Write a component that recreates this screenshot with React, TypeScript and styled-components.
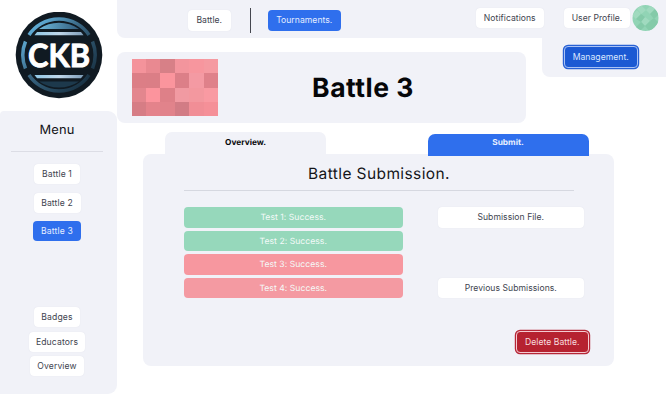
import React from "react";
import styled, { createGlobalStyle, css } from "styled-components";

const GlobalStyle = createGlobalStyle`
  *, *::before, *::after { box-sizing: border-box; }
  body { margin: 0; background: #fff; overflow: hidden; }
  button { font: inherit; letter-spacing: inherit; border: 0; padding: 0; }
`;

const panel = "#f1f2f8";

const Page = styled.div`
  width: 666px;
  height: 403px;
  display: grid;
  grid-template-columns: 117px 1fr;
  background: #fff;
  font-family: Inter, "Liberation Sans", sans-serif;
  font-size: 8.6px;
  letter-spacing: 0.04px;
  text-rendering: geometricPrecision;
  color: #41444f;
`;

const Side = styled.div`
  display: flex;
  flex-direction: column;
`;

const LogoBox = styled.div`
  height: 110.5px;
  padding: 12px 0 0 15px;
  svg { display: block; }
`;

const Menu = styled.nav`
  height: 283px;
  background: ${panel};
  border-radius: 4px 9px 9px 0;
  display: flex;
  flex-direction: column;
  align-items: center;
  padding-right: 3px;
`;

const MenuTitle = styled.h2`
  margin: 10px 0 0;
  height: 31px;
  width: 92px;
  border-bottom: 1px solid #dcdde5;
  font-size: 12.9px;
  font-weight: 400;
  line-height: 20px;
  letter-spacing: 0.2px;
  text-align: center;
  color: #111216;
`;

const MenuGroup = styled.div<{ $top: number; $gap: number }>`
  margin-top: ${(p) => p.$top}px;
  display: flex;
  flex-direction: column;
  align-items: center;
  gap: ${(p) => p.$gap}px;
  letter-spacing: 0.14px;
`;

type Tone = "plain" | "blue" | "focus" | "danger";

const tones = {
  plain: css`
    background: #fff;
    color: #41444f;
    box-shadow: 0 0 1px #d9dbe6;
  `,
  blue: css`
    background: #2f6fed;
    color: #e4edff;
  `,
  focus: css`
    background: #1b59d3;
    color: #dce8ff;
    border: 1px solid #a9c2f5;
    box-shadow: 0 0 0 1.2px #2861d4;
  `,
  danger: css`
    background: #b62230;
    color: #f8dcdf;
    border: 1px solid #f4cbd1;
    box-shadow: 0 0 0 1.2px #b62637;
  `,
};

const Button = styled.button<{ $w: number; $h?: number; $tone?: Tone }>`
  width: ${(p) => p.$w}px;
  height: ${(p) => p.$h ?? 20}px;
  flex: none;
  display: flex;
  align-items: center;
  justify-content: center;
  border-radius: 4px;
  white-space: nowrap;
  ${(p) => tones[p.$tone ?? "plain"]}
`;

const Main = styled.main`
  min-width: 0;
`;

const Top = styled.header`
  height: 52px;
  display: grid;
  grid-template-columns: 425px 124px;
`;

const NavBar = styled.div`
  height: 38px;
  background: ${panel};
  border-radius: 0 0 0 8px;
  display: flex;
  align-items: flex-start;
  padding: 9.5px 0 0 70.5px;
`;

const Divider = styled.div`
  flex: none;
  width: 1px;
  height: 25px;
  margin: -2px 17px 0 19px;
  background: #45474f;
`;

const Notify = styled.div`
  flex: none;
  position: relative;
  z-index: 1;
  margin: -1.5px 0 0 135.5px;
`;

const Account = styled.div`
  height: 76.5px;
  background: ${panel};
  border-radius: 0 0 0 8px;
  padding: 5px 0 0 22px;
`;

const UserRow = styled.div`
  display: flex;
  align-items: center;
  gap: 1.5px;
  height: 26px;
  margin-bottom: 15px;
`;

const Banner = styled.section`
  width: 408.5px;
  height: 71px;
  background: ${panel};
  border-radius: 8px;
  padding: 7px 0 0 14.5px;
  display: flex;
`;

const Mosaic = styled.div`
  width: 86.5px;
  height: 57px;
  display: grid;
  grid-template-columns: repeat(6, 1fr);
  grid-template-rows: repeat(4, 1fr);
`;

const Tile = styled.span<{ $c: string }>`
  background: ${(p) => p.$c};
`;

const Title = styled.h1`
  margin: 0 0 0 81px;
  width: 128px;
  line-height: 58px;
  font-size: 26.5px;
  letter-spacing: 0.5px;
  font-weight: 700;
  text-align: center;
  color: #060709;
`;

const Tabs = styled.div`
  height: 31px;
  padding: 9px 0 0 48px;
  display: flex;
`;

const Tab = styled.div<{ $active?: boolean }>`
  width: 161px;
  height: 23px;
  border-radius: 7px 7px 0 0;
  font-size: 8.3px;
  font-weight: 700;
  letter-spacing: 0;
  line-height: 23px;
  text-align: center;
  background: ${panel};
  color: #08090b;
  ${(p) =>
    p.$active &&
    css`
      position: relative;
      margin: 2px 0 0 101.5px;
      height: 22px;
      line-height: 19px;
      background: #2f6fed;
      color: #e9f0ff;
    `}
`;

const Submission = styled.section`
  margin-left: 26px;
  width: 471px;
  height: 211.5px;
  background: ${panel};
  border-radius: 8px;
  padding: 8px 30px 0 41px;
`;

const SectionTitle = styled.h2`
  margin: 0;
  width: 390px;
  height: 29px;
  border-bottom: 1px solid #d6d8e0;
  font-size: 15.5px;
  font-weight: 400;
  line-height: 24px;
  letter-spacing: 0.4px;
  text-align: center;
  color: #15161a;
`;

const Columns = styled.div`
  margin-top: 16px;
  height: 91px;
  display: flex;
  justify-content: space-between;
`;

const Tests = styled.div`
  display: flex;
  flex-direction: column;
  justify-content: space-between;
`;

const Result = styled.div<{ $c: string }>`
  width: 218.5px;
  height: 20.5px;
  border-radius: 4px;
  line-height: 22px;
  text-align: center;
  background: ${(p) => p.$c};
  color: #f4faf9;
`;

const Actions = styled.div`
  display: flex;
  flex-direction: column;
  justify-content: space-between;
`;

const Footer = styled.div`
  margin: 33px -4.5px 0 0;
  display: flex;
  justify-content: flex-end;
`;

const tiles = [
  "#f4939b", "#e98991", "#d78087", "#f3959d", "#f7969e", "#f59aa1",
  "#dc7e86", "#db7e86", "#fb959d", "#dc7f88", "#f49aa3", "#df818a",
  "#e3868e", "#fc949d", "#de8088", "#f19aa2", "#f3989f", "#f99aa2",
  "#d67d85", "#e4838b", "#e1838b", "#d27c85", "#f18e96", "#f59098",
];

const Logo = () => (
  <svg width="88" height="87" viewBox="0 0 88 87" aria-label="CKB">
    <defs>
      <linearGradient id="ring" gradientUnits="userSpaceOnUse" x1="14" y1="12" x2="74" y2="72">
        <stop offset="0" stopColor="#66b8e4" />
        <stop offset=".45" stopColor="#37637f" />
        <stop offset="1" stopColor="#172f40" />
      </linearGradient>
      <linearGradient id="dome">
        <stop offset="0" stopColor="#6db8dc" />
        <stop offset="1" stopColor="#315c7b" />
      </linearGradient>
      <linearGradient id="bar">
        <stop offset="0" stopColor="#8fc7e5" />
        <stop offset=".5" stopColor="#bfd7ea" />
        <stop offset="1" stopColor="#7e9db8" />
      </linearGradient>
    </defs>
    <circle cx="44" cy="43" r="43.300" fill="#101a22" />
    <g fill="none" stroke="url(#ring)" strokeWidth="3.500">
      <path d="M14 23A36 36 0 0 1 74 23" />
      <path d="M10.500 29.500A36 36 0 0 0 10.500 56.500" />
      <path d="M77.500 29.500A36 36 0 0 1 77.500 56.500" />
      <path d="M14 63A36 36 0 0 0 74 63" />
    </g>
    <path d="M24 17Q33 10.700 44 10.700T64 17Z" fill="url(#dome)" />
    <path d="M24 69.500Q33 75.500 44 75.500T64 69.500Z" fill="#1d394c" />
    <path d="M22 20H66L68.500 23.300H19.500Z" fill="url(#bar)" />
    <path d="M19.500 63H68.500L66 66.300H22Z" fill="url(#bar)" />
    <text x="13" y="55.200" fill="#fff" stroke="#fff" strokeWidth=".9" fontFamily="Lato, sans-serif" fontWeight="700" fontSize="32" textLength="62" lengthAdjust="spacingAndGlyphs">CKB</text>
  </svg>
);

const Avatar = () => (
  <svg width="27" height="27" viewBox="0 0 27 27">
    <defs>
      <clipPath id="face">
        <circle cx="13.500" cy="13" r="13" />
      </clipPath>
    </defs>
    <g clipPath="url(#face)">
      <path fill="#91d4b5" d="M0 0H27V27H0Z" />
      <path fill="#a0dabf" d="M5 4L9 0L14 5L9.500 9ZM0 10L5 5L9 9L4 14ZM14 5L19 0L23 4L18 9ZM9 16L13 12L18 16L13 21Z" />
      <path fill="#84caa9" d="M4 14L9 9L13 12L9 17ZM18 9L23 4L27 9L22 14ZM18 16L22 13L27 18L22 22ZM4 22L9 17L13 21L8 26Z" />
      <path fill="#84cba9" d="M13 21L18 16L23 21L18 27Z" />
    </g>
  </svg>
);

export default function App() {
  return (
    <>
      <GlobalStyle />
      <Page>
        <Side>
          <LogoBox><Logo /></LogoBox>
          <Menu>
            <MenuTitle>Menu</MenuTitle>
            <MenuGroup $top={12.5} $gap={8.5}>
              <Button $w={46.5}>Battle 1</Button>
              <Button $w={47}>Battle 2</Button>
              <Button $w={48} $tone="blue">Battle 3</Button>
            </MenuGroup>
            <MenuGroup $top={66} $gap={4.5}>
              <Button $w={46}>Badges</Button>
              <Button $w={56.5}>Educators</Button>
              <Button $w={54}>Overview</Button>
            </MenuGroup>
          </Menu>
        </Side>
        <Main>
          <Top>
            <NavBar>
              <Button $w={43.5} $h={21}>Battle.</Button>
              <Divider />
              <Button $w={72.5} $h={21} $tone="blue">Tournaments.</Button>
              <Notify><Button $w={67.5}>Notifications</Button></Notify>
            </NavBar>
            <Account>
              <UserRow>
                <Button $w={66}>User Profile.</Button>
                <Avatar />
              </UserRow>
              <Button $w={73.5} $h={21.5} $tone="focus">Management.</Button>
            </Account>
          </Top>
          <Banner>
            <Mosaic>{tiles.map((c, i) => <Tile key={i} $c={c} />)}</Mosaic>
            <Title>Battle 3</Title>
          </Banner>
          <Tabs>
            <Tab>Overview.</Tab>
            <Tab $active>Submit.</Tab>
          </Tabs>
          <Submission>
            <SectionTitle>Battle Submission.</SectionTitle>
            <Columns>
              <Tests>
                <Result $c="#96d8bb">Test 1: Success.</Result>
                <Result $c="#96d8bb">Test 2: Success.</Result>
                <Result $c="#f7979f">Test 3: Success.</Result>
                <Result $c="#f49aa2">Test 4: Success.</Result>
              </Tests>
              <Actions>
                <Button $w={146.5} $h={20.5}>Submission File.</Button>
                <Button $w={146.5} $h={20.5}>Previous Submissions.</Button>
              </Actions>
            </Columns>
            <Footer>
              <Button $w={72.5} $h={21.5} $tone="danger">Delete Battle.</Button>
            </Footer>
          </Submission>
        </Main>
      </Page>
    </>
  );
}
